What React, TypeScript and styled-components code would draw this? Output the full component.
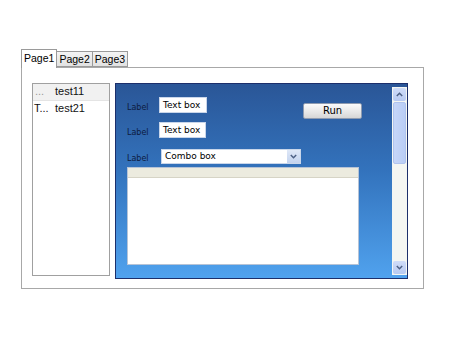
import styled, { createGlobalStyle } from "styled-components";

const GlobalStyle = createGlobalStyle`
  html, body {
    margin: 0;
    background: #ffffff;
    font-family: "DejaVu Sans", "Liberation Sans", sans-serif;
  }
`;

const Page = styled.div`
  padding: 48px 0 0 21px;
  width: 403px;
`;

const TabStrip = styled.div`
  display: flex;
  align-items: flex-end;
  height: 19px;
  position: relative;
  z-index: 1;
`;

const Tab = styled.div<{ $active?: boolean }>`
  box-sizing: border-box;
  height: ${({ $active }) => ($active ? "19px" : "16px")};
  padding: 0 2px;
  margin-bottom: ${({ $active }) => ($active ? "-1px" : "0")};
  border: 1px solid #9a9a9a;
  border-bottom: ${({ $active }) => ($active ? "none" : "1px solid #9a9a9a")};
  border-left: ${({ $active }) => ($active ? "1px solid #9a9a9a" : "none")};
  background: ${({ $active }) =>
    $active ? "#ffffff" : "linear-gradient(#f4f4f4, #e2e2e2)"};
  font-family: "Liberation Sans", Arial, sans-serif;
  font-size: 10.5px;
  line-height: ${({ $active }) => ($active ? "16px" : "14px")};
  color: #000;
`;

const Panel = styled.div`
  box-sizing: border-box;
  height: 222px;
  border: 1px solid #a8a8a8;
  padding: 15px 15px 9px 10px;
  display: flex;
  gap: 5px;
`;

const ListBox = styled.div`
  box-sizing: border-box;
  width: 78px;
  height: 193px;
  border: 1px solid #a0a0a0;
  background: #fff;
  font-family: "Liberation Sans", Arial, sans-serif;
  font-size: 11px;
`;

const ListRow = styled.div<{ $head?: boolean }>`
  display: grid;
  grid-template-columns: 21px 1fr;
  height: 16px;
  line-height: 15px;
  background: ${({ $head }) => ($head ? "#f1f1f1" : "transparent")};
  border-bottom: ${({ $head }) => ($head ? "1px solid #e4e4e4" : "none")};
`;

const ListCell = styled.span<{ $dim?: boolean }>`
  padding-left: ${({ $dim }) => ($dim ? "2px" : "1px")};
  color: ${({ $dim }) => ($dim ? "#9a9a9a" : "#111")};
  white-space: nowrap;
  overflow: hidden;
`;

const BluePanel = styled.div`
  box-sizing: border-box;
  width: 293px;
  height: 196px;
  border: 1px solid #1c2f6b;
  background: linear-gradient(#2a5697 0%, #3373bd 45%, #50a2ee 100%);
  display: flex;
`;

const Content = styled.div`
  flex: 1;
  padding: 13px 0 0 11px;
  display: flex;
  flex-direction: column;
`;

const TopArea = styled.div`
  display: flex;
  width: 235px;
  justify-content: space-between;
`;

const Fields = styled.div`
  display: flex;
  flex-direction: column;
  gap: 9px;
`;

const FieldRow = styled.div`
  display: flex;
  align-items: center;
  height: 16px;
`;

const Label = styled.span`
  width: 32px;
  font-size: 8px;
  color: #0d1b3e;
  padding-top: 4px;
`;

const TextBox = styled.div<{ $w: number }>`
  box-sizing: border-box;
  width: ${({ $w }) => $w}px;
  height: 16px;
  background: #fff;
  border: 1px solid #c9d6ea;
  font-size: 9px;
  line-height: 14px;
  padding-left: 3px;
  color: #000;
`;

const RunButton = styled.div`
  box-sizing: border-box;
  width: 59px;
  height: 16px;
  margin-top: 6px;
  border: 1px solid #8e9bb0;
  border-radius: 2px;
  background: linear-gradient(#fbfbfb, #e6e6e6 60%, #d6d6d6);
  font-size: 10px;
  line-height: 14px;
  text-align: center;
  color: #000;
`;

const ComboRow = styled(FieldRow)`
  margin-top: 11px;
  height: 14px;
`;

const Combo = styled.div`
  box-sizing: border-box;
  width: 140px;
  height: 15px;
  margin-left: 2px;
  background: #fff;
  border: 1px solid #c9d6ea;
  display: flex;
  align-items: center;
  justify-content: space-between;
  font-size: 9px;
  padding-left: 3px;
`;

const ComboButton = styled.div`
  width: 13px;
  height: 13px;
  background: linear-gradient(#dfe8f7, #c3d3ef);
  display: flex;
  align-items: center;
  justify-content: center;
`;

const Grid = styled.div`
  box-sizing: border-box;
  width: 232px;
  height: 98px;
  margin-top: 4px;
  background: #fff;
  border: 1px solid #b6c3d6;
`;

const GridHeader = styled.div`
  height: 9px;
  background: #ecebdf;
  border-bottom: 1px solid #d6d4c6;
`;

const ScrollBar = styled.div`
  box-sizing: border-box;
  width: 15px;
  margin: 3px 0 3px;
  background: #f4f6f2;
  display: flex;
  flex-direction: column;
  align-items: center;
  padding: 1px 0;
`;

const ScrollButton = styled.div`
  width: 13px;
  height: 13px;
  border-radius: 2px;
  background: linear-gradient(#cfdcf8, #b8caf1);
  display: flex;
  align-items: center;
  justify-content: center;
`;

const Thumb = styled.div`
  width: 13px;
  height: 62px;
  margin-top: 1px;
  border-radius: 2px;
  background: linear-gradient(90deg, #c6d6f8, #b9cdf6);
  border: 1px solid #b0c4ee;
  box-sizing: border-box;
`;

const Spacer = styled.div`
  flex: 1;
`;

const Chevron = ({ up }: { up?: boolean }) => (
  <svg width="7" height="5" viewBox="0 0 7 5">
    <path
      d={up ? "M0.8 4 L3.5 1.3 L6.2 4" : "M0.8 1 L3.5 3.7 L6.2 1"}
      fill="none"
      stroke="#4d6185"
      strokeWidth="1.5"
    />
  </svg>
);

export default function App() {
  return (
    <>
      <GlobalStyle />
      <Page>
        <TabStrip>
          <Tab $active>Page1</Tab>
          <Tab>Page2</Tab>
          <Tab>Page3</Tab>
        </TabStrip>
        <Panel>
          <ListBox>
            <ListRow $head>
              <ListCell $dim>...</ListCell>
              <ListCell>test11</ListCell>
            </ListRow>
            <ListRow>
              <ListCell>T...</ListCell>
              <ListCell>test21</ListCell>
            </ListRow>
          </ListBox>
          <BluePanel>
            <Content>
              <TopArea>
                <Fields>
                  <FieldRow>
                    <Label>Label</Label>
                    <TextBox $w={48}>Text box</TextBox>
                  </FieldRow>
                  <FieldRow>
                    <Label>Label</Label>
                    <TextBox $w={47}>Text box</TextBox>
                  </FieldRow>
                </Fields>
                <RunButton>Run</RunButton>
              </TopArea>
              <ComboRow>
                <Label>Label</Label>
                <Combo>
                  Combo box
                  <ComboButton>
                    <Chevron />
                  </ComboButton>
                </Combo>
              </ComboRow>
              <Grid>
                <GridHeader />
              </Grid>
            </Content>
            <ScrollBar>
              <ScrollButton>
                <Chevron up />
              </ScrollButton>
              <Thumb />
              <Spacer />
              <ScrollButton>
                <Chevron />
              </ScrollButton>
            </ScrollBar>
          </BluePanel>
        </Panel>
      </Page>
    </>
  );
}
